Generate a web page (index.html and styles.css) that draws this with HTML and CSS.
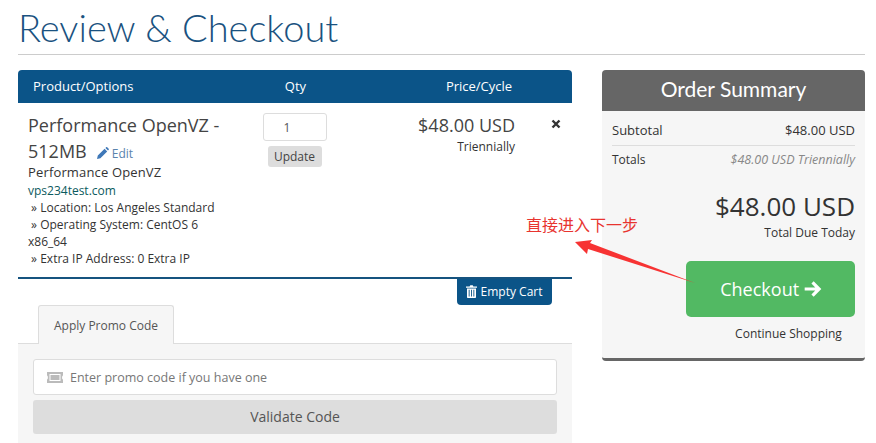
FILE: index.html
```html
<!DOCTYPE html>
<html lang="en">
<head>
    <meta charset="UTF-8">
    <title>Review &amp; Checkout</title>
    <link rel="stylesheet" href="styles.css">
</head>
<body>
    <h1 class="page-title">Review &amp; Checkout</h1>
    <div class="columns">
        <div class="cart">
            <div class="cart-head">
                <div class="col-product">Product/Options</div>
                <div class="col-qty">Qty</div>
                <div class="col-price">Price/Cycle</div>
            </div>
            <div class="cart-item">
                <div class="col-product">
                    <div class="item-name">Performance OpenVZ -</div>
                    <div class="item-name item-name-row">
                        <span>512MB</span>
                        <a class="edit" href="#"><svg class="edit-icon" viewBox="0 0 12 12"><path d="M0 12l.8-3.400L7.600 1.800l2.600 2.600-6.800 6.800zM8.400 1L9.200.3c.3-.3.7-.3 1 0l1.500 1.500c.3.3.3.7 0 1l-.7.8z"/></svg> Edit</a>
                    </div>
                    <div class="item-group">Performance OpenVZ</div>
                    <div class="item-domain">vps234test.com</div>
                    <div class="item-opt">&nbsp;» Location: Los Angeles Standard</div>
                    <div class="item-opt">&nbsp;» Operating System: CentOS 6<br>x86_64</div>
                    <div class="item-opt">&nbsp;» Extra IP Address: 0 Extra IP</div>
                </div>
                <div class="col-qty">
                    <div class="qty-input">1</div>
                    <button class="update">Update</button>
                </div>
                <div class="col-price">
                    <div class="price">$48.00 USD</div>
                    <div class="cycle">Triennially</div>
                </div>
                <svg class="remove" viewBox="0 0 10 10"><path d="M1.500 1.500l7 7M8.500 1.500l-7 7"/></svg>
            </div>
            <div class="cart-actions">
                <button class="empty-cart"><svg class="trash" viewBox="0 0 11 13"><path d="M3.600 1.600L4.300.3h2.400l.7 1.300H11v1.200H0V1.600zM1 3.400h9v8.600c0 .6-.4 1-1 1H2c-.6 0-1-.4-1-1zm1.700 1.400v6.600h.9V4.800zm2.400 0v6.600H6V4.800zm2.300 0v6.600h.9V4.800z"/></svg> Empty Cart</button>
            </div>
            <div class="tabs">
                <div class="tab">Apply Promo Code</div>
            </div>
            <div class="promo">
                <div class="promo-input">
                    <svg class="ticket" viewBox="0 0 16 11"><path d="M0 0h16v3.500c-1.200 0-1.200 4 0 4V11H0V7.500c1.200 0 1.200-4 0-4zM2.500 2v7h11V2z"/><rect x="3.500" y="3" width="9" height="5"/></svg>
                    Enter promo code if you have one
                </div>
                <button class="validate">Validate Code</button>
            </div>
        </div>
        <div class="summary">
            <div class="summary-title">Order Summary</div>
            <div class="summary-body">
                <div class="summary-row summary-sub"><span class="row-label">Subtotal</span><span class="row-value">$48.00 USD</span></div>
                <div class="summary-row"><span>Totals</span><em>$48.00 USD Triennially</em></div>
                <div class="total">$48.00 USD</div>
                <div class="total-label">Total Due Today</div>
                <button class="checkout">Checkout <svg class="arrow-icon" viewBox="0 0 16 14"><path d="M8.600.2l6.800 6.800-6.800 6.800-2-2 3.400-3.400H.6V5.600h9.400L6.600 2.200z"/></svg></button>
                <div class="continue">Continue Shopping</div>
            </div>
        </div>
    </div>
    <div class="note">直接进入下一步</div>
    <svg class="note-arrow" viewBox="0 0 876 443"><polygon points="575,242 592,240 590,243 695,283 588,249 587,254"/></svg>
</body>
</html>
```

FILE: styles.css
```css
* { box-sizing: border-box; }
html, body { height: 443px; overflow: hidden; }
body { margin: 0; padding: 0 11px 0 18px; font-family: "Open Sans", sans-serif; font-size: 12px; color: #333; background: #fff; position: relative; }
button { font-family: inherit; border: 0; display: block; }

.page-title { margin: 0; height: 55px; padding-top: 6px; font-family: Lato, sans-serif; font-weight: 300; font-size: 38px; line-height: 42px; color: #1a5280; border-bottom: 1px solid #ccc; }

.columns { display: flex; justify-content: space-between; margin-top: 15px; }
.cart { width: 554px; }

.cart-head { display: flex; height: 33px; line-height: 33px; background: #0b5488; color: #fff; font-size: 13px; border-radius: 4px 4px 0 0; }
.col-product { width: 235px; }
.col-qty { width: 85px; text-align: center; }
.col-price { width: 178px; text-align: right; }
.cart-head .col-product { padding-left: 15px; }
.cart-head .col-price { text-align: center; width: 234px; padding-left: 48px; }

.cart-item { display: flex; position: relative; height: 176px; padding: 10px 0 0 10px; border-bottom: 2px solid #15537f; }
.cart-item .col-product { width: 224px; }
.item-name { font-size: 18px; line-height: 25px; color: #444; }
.item-name-row { display: flex; align-items: baseline; gap: 10px; height: 25px; line-height: 26px; }
.edit { font-size: 12px; color: #5a83ad; text-decoration: none; }
.edit-icon { width: 12px; height: 12px; fill: #3f78b8; vertical-align: -1px; }
.item-group { font-size: 13px; line-height: 19px; letter-spacing: .15px; }
.item-domain { line-height: 17px; color: #0b5a5e; }
.item-opt { line-height: 17px; }
.qty-input { width: 64px; height: 28px; margin: 0 auto; line-height: 28px; border: 1px solid #ddd; border-radius: 3px; color: #555; text-align: center; padding-right: 15px; }
.update { margin: 5px auto 0; height: 21px; width: 54px; padding: 0; font-size: 12px; color: #444; background: #ddd; border-radius: 3px; }
.price { font-size: 18px; line-height: 25px; color: #444; }
.cycle { line-height: 18px; }
.remove { position: absolute; left: 533px; top: 16px; width: 10px; height: 10px; fill: none; stroke: #333; stroke-width: 2.4; }

.cart-actions { display: flex; justify-content: flex-end; padding-right: 20px; }
.empty-cart { height: 26px; width: 95px; padding: 0 0 2px; font-size: 12px; color: #fff; background: #0b5488; border-radius: 0 0 4px 4px; }
.trash { width: 11px; height: 13px; fill: #fff; vertical-align: -2px; }

.tabs { display: flex; padding-left: 20px; height: 39px; border-bottom: 1px solid #ddd; }
.tab { width: 136px; height: 39px; line-height: 39px; text-align: center; background: #f6f6f6; border: 1px solid #ddd; border-bottom: 0; border-radius: 3px 3px 0 0; color: #555; }
.promo { background: #f6f6f6; padding: 15px 15px 5px; height: 100px; }
.promo-input { display: flex; align-items: center; gap: 7px; height: 36px; padding-left: 13px; background: #fff; border: 1px solid #ddd; border-radius: 3px; font-size: 12.5px; color: #777; }
.ticket { width: 16px; height: 11px; fill: #bbb; }
.validate { width: 100%; height: 34px; margin-top: 5px; padding: 0 0 2px; font-size: 14px; color: #555; background: #ddd; border-radius: 3px; }

.summary { width: 263px; height: 291px; background: #f6f6f6; border-bottom: 3px solid #666; border-radius: 4px; }
.summary-title { height: 41px; line-height: 38px; text-align: center; color: #fff; font-family: Lato, sans-serif; font-size: 21px; font-weight: 400; background: #666; border-radius: 4px 4px 0 0; }
.summary-body { padding: 9px 10px 0; }
.summary-row { display: flex; justify-content: space-between; line-height: 20px; padding: 0 0 5px; }
.summary-row em { color: #888; font-size: 12.5px; }
.row-label, .row-value { font-size: 13px; }
.summary-sub { border-bottom: 1px solid #ddd; margin-bottom: 4px; }
.total { margin-top: 13px; text-align: right; font-size: 26px; line-height: 36px; color: #333; }
.total-label { text-align: right; line-height: 17px; }
.checkout { width: 169px; height: 56px; margin: 20px 0 0 74px; padding: 0 0 0 1px; font-size: 18px; color: #fff; background: #52b963; border-radius: 5px; }
.arrow-icon { width: 18px; height: 16px; fill: #fff; vertical-align: -1px; }
.continue { margin-top: 8px; text-align: center; padding-left: 110px; line-height: 18px; white-space: nowrap; }

.note { position: absolute; left: 526px; top: 214px; font-family: "Noto Sans CJK SC", sans-serif; font-size: 16px; line-height: 20px; color: #e8342f; }
.note-arrow { position: absolute; left: 0; top: 0; width: 876px; height: 443px; fill: #f73333; pointer-events: none; }
```
